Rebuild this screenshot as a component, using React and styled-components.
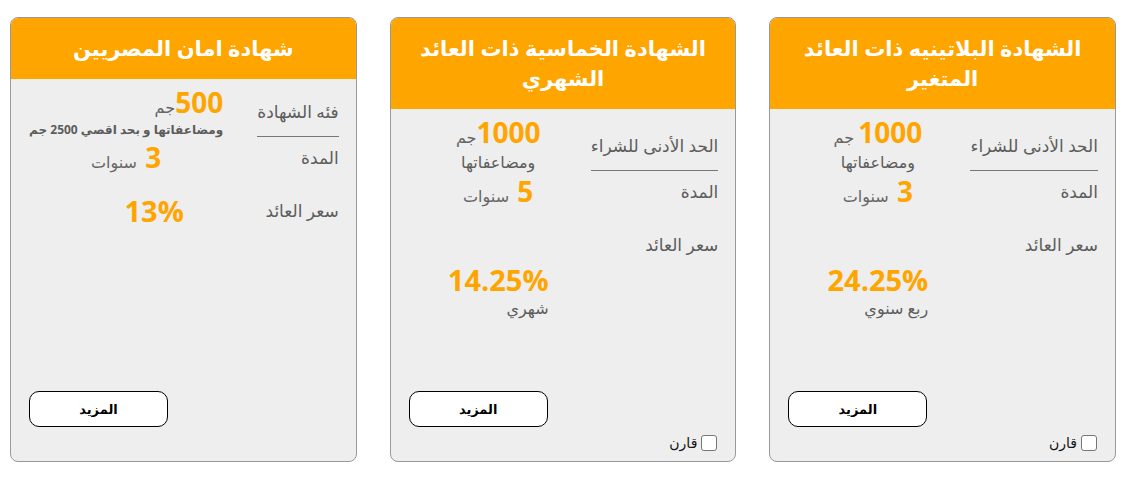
import React from 'react'
import styled, { createGlobalStyle } from 'styled-components'

const GlobalStyle = createGlobalStyle`
body {
  margin: 0;
  background: #ffffff;
  font-family: "Open Sans", "DejaVu Sans", sans-serif;
}
`

const Page = styled.div`
direction: rtl;
display: flex;
align-items: flex-start;
gap: 33px;
padding: 17px 10px 0;
`

const Card = styled.div`
width: 347px;
height: 445px;
box-sizing: border-box;
border: 1px solid #999;
border-radius: 8px;
overflow: hidden;
background: #eeeeee;
display: flex;
flex-direction: column;
`

const Header = styled.div`
background: #ffa500;
color: #fff;
text-align: center;
font-size: 21px;
font-weight: 700;
line-height: 30px;
padding: 15px 20px 16px;
`

const Body = styled.div`
flex: 1;
display: grid;
grid-template-columns: auto minmax(0, 1fr);
align-content: start;
column-gap: ${p => p.$gap}px;
padding: 7px 17px 0 18px;
`

const Label = styled.div`
display: flex;
align-items: ${p => (p.$underline ? 'flex-end' : 'center')};
font-size: 17px;
line-height: ${p => (p.$underline ? '24px' : '32px')};
color: #5c5c5c;
margin-top: ${p => p.$top || 0}px;
padding-bottom: ${p => (p.$underline ? '12px' : '0')};
border-bottom: ${p => (p.$underline ? '1px solid #777' : 'none')};
align-self: ${p => (p.$underline ? 'stretch' : 'start')};
white-space: nowrap;
`

const Value = styled.div`
display: flex;
justify-content: center;
margin-top: ${p => p.$top || 0}px;
padding-left: ${p => p.$shift || 0}px;
min-width: 0;
`

const Stack = styled.div`
display: flex;
flex-direction: column;
align-items: ${p => (p.$start ? 'flex-start' : 'center')};
`

const Line = styled.div`
line-height: ${p => p.$lh || 32}px;
white-space: nowrap;
`

const Num = styled.span`
font-size: ${p => p.$size || 28}px;
font-weight: 700;
color: #ffa500;
`

const Unit = styled.span`
font-size: 16px;
color: #666;
`

const Note = styled.div`
font-size: ${p => (p.$small ? '12px' : '16px')};
font-weight: ${p => (p.$small ? 700 : 400)};
line-height: ${p => (p.$small ? '14px' : '18px')};
color: #5c5c5c;
white-space: nowrap;
`

const Footer = styled.div`
display: flex;
flex-direction: column;
padding: 0 18px;
`

const MoreButton = styled.button`
align-self: flex-end;
width: 139px;
height: 36px;
background: #fff;
border: 1px solid #000;
border-radius: 10px;
font-family: "DejaVu Sans", sans-serif;
font-size: 13px;
font-weight: 700;
color: #000;
cursor: pointer;
`

const Compare = styled.label`
display: flex;
align-items: center;
gap: 4px;
height: 18px;
margin: 7px 0 9px;
font-family: "DejaVu Sans", sans-serif;
font-size: 14px;
color: #111;
visibility: ${p => (p.$hidden ? 'hidden' : 'visible')};
`

const Box = styled.input`
appearance: none;
width: 16px;
height: 16px;
margin: 0;
background: #fff;
border: 1px solid #767676;
border-radius: 3px;
`

const cards = [
    {
        title: 'الشهادة البلاتينيه ذات العائد المتغير',
        first: 'الحد الأدنى للشراء',
        amount: '1000',
        unit: ' جم',
        amountNote: 'ومضاعفاتها',
        years: '3',
        rate: '24.25%',
        rateNote: 'ربع سنوي',
        compare: true,
        gap: 3,
    },
    {
        title: 'الشهادة الخماسية ذات العائد الشهري',
        first: 'الحد الأدنى للشراء',
        amount: '1000',
        unit: 'جم',
        amountNote: 'ومضاعفاتها',
        years: '5',
        rate: '14.25%',
        rateNote: 'شهري',
        compare: true,
        gap: 3,
    },
    {
        title: 'شهادة امان المصريين',
        first: 'فئه الشهادة',
        amount: '500',
        unit: 'جم',
        amountNote: 'ومضاعفاتها و بحد اقصي 2500 جم',
        small: true,
        years: '3',
        rate: '13%',
        rateShift: 56,
        compare: false,
        gap: 34,
    },
]

const CertificateCard = ({ c }) => (
    <Card>
        <Header>{c.title}</Header>
        <Body $gap={c.gap}>
            <Label $underline>{c.first}</Label>
            <Value>
                <Stack $start={c.small}>
                    <Line><Num>{c.amount}</Num><Unit>{c.unit}</Unit></Line>
                    <Note $small={c.small}>{c.amountNote}</Note>
                </Stack>
            </Value>

            <Label $top={5}>المدة</Label>
            <Value $top={4}>
                <Line><Num>{c.years}</Num><Unit>&nbsp; سنوات</Unit></Line>
            </Value>

            <Label $top={17}>سعر العائد</Label>
            <Value $top={c.rateNote ? 54 : 17} $shift={c.rateShift}>
                <Stack $start>
                    <Line $lh={c.rateNote ? 28 : 32}><Num $size={29}>{c.rate}</Num></Line>
                    {c.rateNote && <Note>{c.rateNote}</Note>}
                </Stack>
            </Value>
        </Body>
        <Footer>
            <MoreButton>المزيد</MoreButton>
            <Compare $hidden={!c.compare}>
                <Box type="checkbox" />
                قارن
            </Compare>
        </Footer>
    </Card>
)

const App = () => {
    return (
        <>
            <GlobalStyle />
            <Page>
                {cards.map((c) => <CertificateCard key={c.title} c={c} />)}
            </Page>
        </>
    )
}

export default App
